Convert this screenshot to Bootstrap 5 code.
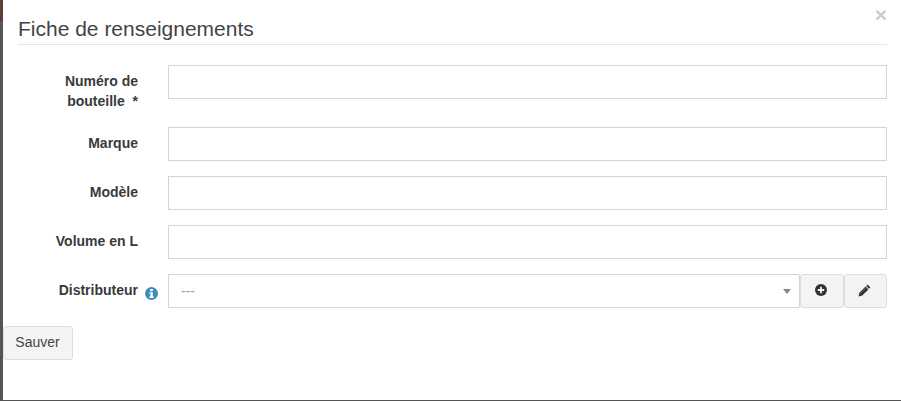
<!DOCTYPE html>
<html lang="fr">
<head>
  <meta charset="UTF-8">
  <meta name="viewport" content="width=device-width, initial-scale=1">
  <title>Fiche de renseignements</title>
  <link rel="stylesheet" href="https://cdn.jsdelivr.net/npm/bootstrap@5.3.0/dist/css/bootstrap.min.css">
  <style>
    html, body { height: 401px; overflow: hidden; background: #fff; }
    body { font-family: "Liberation Sans", Arial, sans-serif; font-size: 14px; color: #333; }
    .page-shell { height: 401px; background: linear-gradient(#643a35 0, #643a35 21px, #555 21px); padding: 0 0 1px 3px; }
    .sheet { height: 400px; background: #fff; }
    .sheet-head { padding: 0 14px 0 15px; height: 45px; }
    .sheet-title { font-size: 21px; line-height: 23px; font-weight: 400; color: #444; margin: 0; padding-top: 17px; height: 45px; border-bottom: 1px solid #e5e5e5; }
    .close-x { top: 4px; right: 13px; font-size: 21px; line-height: 21px; font-weight: 700; color: #000; opacity: .2; background: none; border: 0; padding: 0; margin-right: 1px; }
    .sheet-form { padding: 20px 14px 0 15px; }
    .field-row { margin-bottom: 15px; }
    .field-row.first-row { margin-bottom: 16px; }
    .field-label { width: 120px; flex: none; text-align: right; font-weight: 700; line-height: 20px; padding-top: 6px; margin: 0; color: #3a3a3a; }
    .field-gap { width: 30px; flex: none; }
    .info-dot { width: 13px; height: 13px; left: 127px; top: 13px; }
    .field-input { height: 34px; border: 1px solid #d2d2e0; border-radius: 0; padding: 6px 12px; font-size: 14px; color: #555; }
    .select-box { height: 34px; border: 1px solid #d2d2e0; border-radius: 0 2px 2px 0; padding: 0 12px; color: #999; line-height: 32px; }
    .select-arrow { width: 0; height: 0; border-left: 4px solid transparent; border-right: 4px solid transparent; border-top: 5px solid #888; right: 8px; top: 14px; }
    .tool-btn { height: 34px; width: 44px; padding: 0 2px 2px 0; border: 1px solid #ddd; border-radius: 3px; background: #f4f4f4; display: flex; align-items: center; justify-content: center; }
    .tool-btn.pen { width: 43px; }
    .save-btn { height: 34px; width: 70px; padding: 0 1px 2px 0; font-size: 14px; color: #444; background: #f4f4f4; border: 1px solid #ddd; border-radius: 3px; margin-top: 3px; }
  </style>
</head>
<body>
  <div class="page-shell">
    <div class="sheet position-relative">
      <button type="button" class="close-x position-absolute">×</button>
      <div class="sheet-head">
        <h4 class="sheet-title">Fiche de renseignements</h4>
      </div>
      <form class="sheet-form">
        <div class="d-flex field-row first-row">
          <label class="field-label">Numéro de bouteille&nbsp; *</label>
          <div class="field-gap"></div>
          <input type="text" class="field-input form-control">
        </div>
        <div class="d-flex field-row">
          <label class="field-label">Marque</label>
          <div class="field-gap"></div>
          <input type="text" class="field-input form-control">
        </div>
        <div class="d-flex field-row">
          <label class="field-label">Modèle</label>
          <div class="field-gap"></div>
          <input type="text" class="field-input form-control">
        </div>
        <div class="d-flex field-row">
          <label class="field-label">Volume en L</label>
          <div class="field-gap"></div>
          <input type="text" class="field-input form-control">
        </div>
        <div class="d-flex field-row position-relative">
          <label class="field-label">Distributeur</label>
          <svg class="info-dot position-absolute" viewBox="0 0 13 13">
            <circle cx="6.5" cy="6.5" r="6.5" fill="#3c8dbc"/>
            <rect x="5.2" y="2" width="2.6" height="2.2" fill="#fff"/>
            <path d="M4.4 5.3h3.4v4.3h.9v1.3H4.4V9.6h1V6.6h-1z" fill="#fff"/>
          </svg>
          <div class="field-gap"></div>
          <div class="select-box position-relative flex-grow-1">---<span class="select-arrow position-absolute"></span></div>
          <button type="button" class="tool-btn">
            <svg width="12" height="12" viewBox="0 0 12 12">
              <circle cx="6" cy="6" r="6" fill="#333"/>
              <path d="M5.1 2.8h1.8v2.3h2.3v1.8H6.9v2.3H5.1V6.9H2.8V5.1h2.3z" fill="#f4f4f4"/>
            </svg>
          </button>
          <button type="button" class="tool-btn pen">
            <svg width="13" height="13" viewBox="0 0 13 13">
              <path d="M9.6 .6l2.8 2.8-1.4 1.4-2.8-2.8zM7.6 2.6l2.8 2.8-6.2 6.2-3.6.8.8-3.6z" fill="#333"/>
              <path d="M2.4 9.6l5.4-5.4" stroke="#777" stroke-width=".7" fill="none"/>
            </svg>
          </button>
        </div>
      </form>
      <button type="button" class="save-btn">Sauver</button>
    </div>
  </div>
</body>
</html>
